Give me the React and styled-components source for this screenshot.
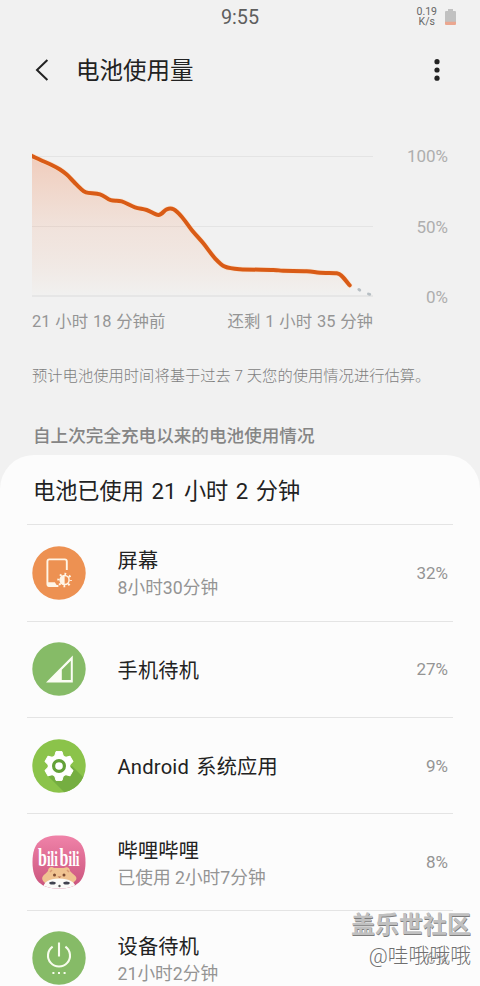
import React from 'react'
import styled, { createGlobalStyle } from "styled-components"

const GlobalStyle = createGlobalStyle`
  * {
    box-sizing: border-box;
  }
  body {
    margin: 0;
    background: #f1f1f1;
    overflow: hidden;
    font-family: Roboto, "Noto Sans CJK SC", sans-serif;
  }
`

const history = [
  [-4, 154.2], [0, 156], [9, 160.2], [19.7, 165], [28, 169.5], [34.7, 174.6], [42, 182],
  [48, 188], [54, 192.4],
  [68, 194.3], [78.7, 200.2], [89.7, 201.3], [103, 207.3], [114.7, 210], [126.5, 215],
  [134.7, 209.3], [141.5, 209.3], [149.7, 216.7], [159.7, 230], [171.3, 243.3],
  [183, 258.3], [193, 266.7], [208, 269.2], [241.3, 269.9], [251, 270.8],
  [274.7, 271.2], [288, 272.8], [304.7, 273.2], [310, 276.3], [317.7, 285.3],
]

const apps = [
  { name: "屏幕", time: "8小时30分钟", percent: "32%", icon: <ScreenIcon /> },
  { name: "手机待机", percent: "27%", icon: <SignalIcon /> },
  { name: "Android 系统应用", percent: "9%", icon: <GearIcon /> },
  { name: "哔哩哔哩", time: "已使用 2小时7分钟", percent: "8%", icon: <BiliIcon /> },
  { name: "设备待机", time: "21小时2分钟", percent: "6%", icon: <PowerIcon /> },
]

// smooth curve through every point
const toPath = (pts) => {
  let d = `M${pts[0][0]} ${pts[0][1]}`
  for (let i = 0; i < pts.length - 1; i++) {
    const a = pts[i - 1] || pts[i]
    const b = pts[i]
    const c = pts[i + 1]
    const e = pts[i + 2] || c
    d += ` C${b[0] + (c[0] - a[0]) / 6} ${b[1] + (c[1] - a[1]) / 6} ${c[0] - (e[0] - b[0]) / 6} ${c[1] - (e[1] - b[1]) / 6} ${c[0]} ${c[1]}`
  }
  return d
}

function BatteryChart() {
  const line = toPath(history)
  return (
    <ChartSvg viewBox="0 150 341 150">
      <defs>
        <linearGradient id="fill" x1="0" y1="0" x2="0" y2="1">
          <stop offset="0" stopColor="#ee7f4c" stopOpacity="0.33" />
          <stop offset="0.55" stopColor="#ee8f60" stopOpacity="0.14" />
          <stop offset="1" stopColor="#f1efe9" stopOpacity="0.2" />
        </linearGradient>
        <clipPath id="plot"><rect x="0" y="150" width="341" height="150" /></clipPath>
      </defs>
      <rect x="0" y="156" width="341" height="1" fill="#e4e4e4" />
      <rect x="0" y="226" width="341" height="1" fill="#e4e4e4" />
      <rect x="0" y="295" width="341" height="2" fill="#e6e6e6" />
      <g clipPath="url(#plot)">
        <path d={`${line} L317.7 295 L-4 295 Z`} fill="url(#fill)" />
        <path d={line} fill="none" stroke="#fbdcc0" strokeWidth="5.4" strokeLinecap="round" opacity="0.6" />
        <path d={line} fill="none" stroke="#d95b16" strokeWidth="4" strokeLinecap="round" />
      </g>
      <path d="M326.8 289.4l1 .8M336.4 294l1.4 .4" stroke="#b7bfc4" strokeWidth="2.8" strokeLinecap="round" />
    </ChartSvg>
  )
}

function ScreenIcon() {
  return (
    <IconSvg viewBox="0 0 54 54">
      <circle cx="27" cy="27" r="26.7" fill="#ed9152" />
      <path d="M34.8 24V15.4a2 2 0 0 0-2-2H17.4a2 2 0 0 0-2 2v22.6a2 2 0 0 0 2 2h9" fill="none" stroke="#fff5e6" strokeWidth="1.9" />
      <path d="M15.2 36.2h7.6l3 4.6h-8.6a2 2 0 0 1-2-2z" fill="#fff5e6" />
      <circle cx="32.6" cy="34" r="6.2" fill="none" stroke="#fff5e6" strokeWidth="2.2" strokeDasharray="1.8 3.07" strokeDashoffset="0.9" />
      <circle cx="32.6" cy="34" r="4.5" fill="none" stroke="#fff5e6" strokeWidth="1.5" />
      <path d="M32.6 29.5a4.5 4.5 0 0 0 0 9z" fill="#fff5e6" />
    </IconSvg>
  )
}

function SignalIcon() {
  return (
    <IconSvg viewBox="0 0 54 54">
      <circle cx="27" cy="27" r="26.7" fill="#86bb67" />
      <path d="M40.8 13.4v27H14zM38.8 18.8L29.8 27.8v10.2h9z" fill="#fbfdf4" fillRule="evenodd" />
    </IconSvg>
  )
}

function GearIcon() {
  return (
    <IconSvg viewBox="0 0 54 54">
      <defs>
        <clipPath id="gearClip"><circle cx="27" cy="27" r="26.7" /></clipPath>
      </defs>
      <circle cx="27" cy="27" r="26.7" fill="#8bc34a" />
      <path clipPath="url(#gearClip)" d="M16 37L34 55H54V41L40 27Z" fill="#75ae41" />
      <g fill="#fff">
        <circle cx="27" cy="27" r="11.3" />
        {[0, 60, 120, 180, 240, 300].map((deg) => (
          <path key={deg} d="M22.6 17.5L24 12.6h6l1.4 4.9z" stroke="#fff" strokeWidth="1" strokeLinejoin="round" transform={`rotate(${deg} 27 27)`} />
        ))}
      </g>
      <circle cx="27" cy="27" r="5.4" fill="#fff" stroke="#64a138" strokeWidth="3.2" />
    </IconSvg>
  )
}

function BiliIcon() {
  return (
    <IconSvg viewBox="0 0 54 54">
      <defs>
        <linearGradient id="pink" x1="0" y1="0" x2="0" y2="1">
          <stop offset="0" stopColor="#f083a9" />
          <stop offset="1" stopColor="#c9527b" />
        </linearGradient>
        <clipPath id="biliClip">
          <path d="M27 .5C45 .5 53.5 8 53.5 27S45 53.5 27 53.5.5 46 .5 27 9 .5 27 .5z" />
        </clipPath>
      </defs>
      <g clipPath="url(#biliClip)">
        <rect width="54" height="54" fill="url(#pink)" />
        <path d="M11 46c-3-5 3-7 5-10 0-4 4-5 6-3h10c3-2 6 0 6 3 3 4 8 5 6 9l-4 4H14z" fill="#f0c391" />
        <path d="M18 37l2-2M35 35l2 2" stroke="#d99a75" strokeWidth="1.5" />
        <circle cx="22.5" cy="40" r="1.5" fill="#7c4b32" />
        <circle cx="32" cy="40" r="1.5" fill="#7c4b32" />
        <path d="M25.5 41.5h4l-2 1.6z" fill="#b56b4c" />
        <path d="M11 54c0-7 6-10.5 16-10.5s17 3.500 17 10.500z" fill="#fbfaf7" />
        <ellipse cx="20.500" cy="48" rx="3.200" ry="1.500" fill="#41424e" />
        <ellipse cx="34.500" cy="48" rx="3.200" ry="1.500" fill="#41424e" />
        <circle cx="27.5" cy="51" r="1.2" fill="#555" />
      </g>
      <g transform="translate(6 31) scale(.8 1.25)">
        <LogoText x="0" y="0"><tspan fontSize="20">b</tspan><tspan fontSize="16.500">ili</tspan></LogoText>
        <LogoText x="27" y="0"><tspan fontSize="20">b</tspan><tspan fontSize="16.500">ili</tspan></LogoText>
      </g>
    </IconSvg>
  )
}

function PowerIcon() {
  return (
    <IconSvg viewBox="0 0 54 54">
      <circle cx="27" cy="27" r="26.7" fill="#86bb67" />
      <path d="M20.6 15.6a11 11 0 1 0 12.8 0M27 11.4v14" fill="none" stroke="#f7fced" strokeWidth="2.1" />
      <path d="M20.4 42h2M26 42h2M31.6 42h2" stroke="#f7fced" strokeWidth="1.8" />
    </IconSvg>
  )
}

function App() {
  return (
    <Container>
      <GlobalStyle />
      <StatusBar>
        <Clock>9:55</Clock>
        <StatusRight>
          <Speed>
            <span>0.19</span>
            <span>K/s</span>
          </Speed>
          <svg width="11" height="16" viewBox="0 0 11 16">
            <path d="M3 0h5v2h2a1 1 0 0 1 1 1v10H0V3a1 1 0 0 1 1-1h2z" fill="#c1c1c1" />
            <path d="M0 12.7h11V15a1 1 0 0 1-1 1H1a1 1 0 0 1-1-1z" fill="#eba790" />
          </svg>
        </StatusRight>
      </StatusBar>

      <TitleBar>
        <svg width="14" height="22" viewBox="0 0 14 22">
          <path d="M12.4 1L2 11l10.4 10" fill="none" stroke="#222" strokeWidth="2" />
        </svg>
        <Title>电池使用量</Title>
        <svg width="6" height="22" viewBox="0 0 6 22">
          <circle cx="3" cy="2.7" r="2.6" fill="#222" />
          <circle cx="3" cy="11" r="2.6" fill="#222" />
          <circle cx="3" cy="19.2" r="2.6" fill="#222" />
        </svg>
      </TitleBar>

      <ChartArea>
        <BatteryChart />
        <Scale>
          <span>100%</span>
          <span>50%</span>
          <span>0%</span>
        </Scale>
      </ChartArea>
      <TimeLabels>
        <span>21 小时 18 分钟前</span>
        <span>还剩 1 小时 35 分钟</span>
      </TimeLabels>

      <Note>预计电池使用时间将基于过去 7 天您的使用情况进行估算。</Note>
      <SectionTitle>自上次完全充电以来的电池使用情况</SectionTitle>

      <Card>
        <CardTitle>电池已使用 21 小时 2 分钟</CardTitle>
        {apps.map((props) => (
          <Row key={props.name}>
            {props.icon}
            <RowText>
              <AppName>{props.name}</AppName>
              {props.time ? <AppTime>{props.time}</AppTime> : null}
            </RowText>
            <Percent>{props.percent}</Percent>
          </Row>
        ))}
      </Card>

      <Watermark>
        <Community>盖乐世社区</Community>
        <Author>@哇哦哦哦</Author>
      </Watermark>
    </Container>
  )
}

export default App

const Container = styled.div`
position: relative;
display: flex;
flex-direction: column;
width: 480px;
height: 986px;
overflow: hidden;
background: #f1f1f1;
white-space: nowrap;

> * {
  flex-shrink: 0;
}
`

const StatusBar = styled.div`
display: grid;
grid-template-columns: 1fr auto 1fr;
align-items: center;
height: 34px;
padding: 0 24px;
`

const Clock = styled.div`
grid-column: 2;
font-size: 19.8px;
color: #5e5e5e;
`

const StatusRight = styled.div`
display: flex;
justify-content: flex-end;
align-items: center;
gap: 8px;
`

const Speed = styled.div`
display: flex;
flex-direction: column;
align-items: center;
font-size: 10.5px;
line-height: 10px;
color: #666;
`

const TitleBar = styled.div`
display: flex;
align-items: center;
height: 72px;
padding: 0 40px 0 35px;
`

const Title = styled.div`
flex: 1;
margin-left: 27px;
padding-top: 2px;
font-size: 23.5px;
line-height: 34px;
color: #222;
`

const ChartArea = styled.div`
display: flex;
justify-content: space-between;
height: 150px;
margin-top: 44px;
padding: 0 32px;
`

const ChartSvg = styled.svg`
width: 341px;
height: 150px;
overflow: visible;
`

const Scale = styled.div`
display: flex;
flex-direction: column;
justify-content: space-between;
height: 161px;
margin-top: -4px;
text-align: right;
font-size: 17px;
line-height: 20px;
color: #aeaeae;
`

const TimeLabels = styled.div`
display: flex;
justify-content: space-between;
width: 341px;
margin: 9px 0 0 32px;
font-size: 16.4px;
line-height: 25px;
word-spacing: 0.8px;
color: #959595;
`

const Note = styled.div`
margin: 30px 0 0 32px;
font-size: 15.3px;
font-weight: 300;
line-height: 24px;
color: #7e7e7e;
`

const SectionTitle = styled.div`
margin: 35px 0 0 33px;
font-size: 17.6px;
font-weight: 500;
line-height: 26px;
color: #858585;
`

const Card = styled.div`
margin-top: 6.2px;
padding: 0 27px;
border-radius: 34px 34px 0 0;
background: #fcfcfc;
`

const CardTitle = styled.div`
height: 69px;
padding-left: 6px;
font-size: 22.2px;
line-height: 73px;
word-spacing: 2px;
color: #222;
`

const Row = styled.div`
display: flex;
align-items: center;
height: 96.4px;
padding: 0 5px 0 4.5px;
border-top: 1px solid #e4e4e4;
`

const IconSvg = styled.svg`
flex-shrink: 0;
width: 54px;
height: 54px;
`

const RowText = styled.div`
flex: 1;
margin-left: 32px;
padding-top: 4px;
`

const AppName = styled.div`
font-size: 20.2px;
line-height: 27px;
letter-spacing: 0.2px;
word-spacing: 2px;
color: #222;
`

const AppTime = styled.div`
font-size: 17.7px;
line-height: 26px;
color: #949494;
`

const Percent = styled.div`
font-size: 17px;
color: #949494;
`

const LogoText = styled.text`
fill: #fff;
font-family: "Liberation Serif", serif;
font-weight: bold;
`

const Watermark = styled.div`
position: absolute;
right: 9px;
bottom: 15px;
display: flex;
flex-direction: column;
align-items: flex-end;
`

const Community = styled.div`
font-size: 24px;
font-weight: bold;
line-height: 32px;
color: #c0c0c0;
text-shadow: 0.5px 1px 0 #7d7d7d;
`

const Author = styled.div`
font-size: 20.8px;
font-weight: 300;
line-height: 30px;
color: #6f6f6f;
text-shadow: 1px 1px 0 #fff;
`
